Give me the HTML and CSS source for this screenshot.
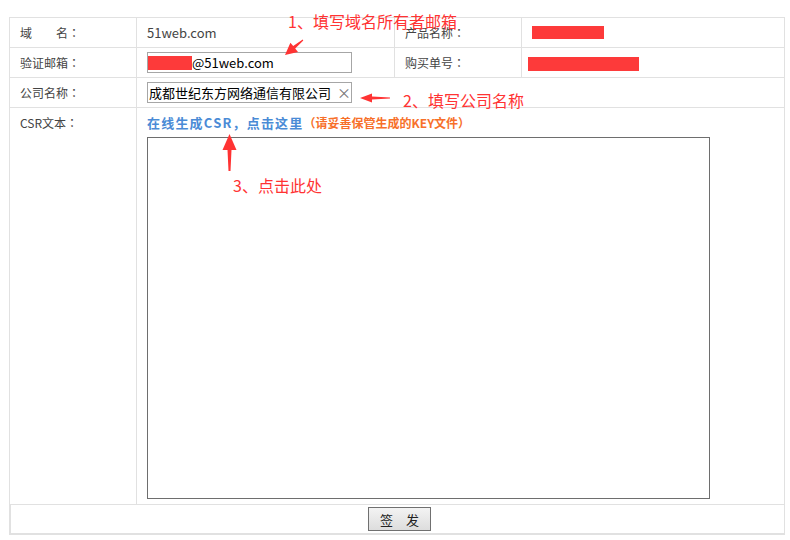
FILE: index.html
```html
<!DOCTYPE html>
<html lang="zh-CN">
<head>
<meta charset="utf-8">
<title>CSR 签发</title>
<link rel="stylesheet" href="styles.css">
</head>
<body>
<div class="page">
  <div class="form">
    <div class="cell label">域　　名<span class="colon">：</span></div>
    <div class="cell value">51web.com</div>
    <div class="cell label">产品名称<span class="colon">：</span></div>
    <div class="cell value"><span class="redact r1"></span></div>

    <div class="cell label">验证邮箱<span class="colon">：</span></div>
    <div class="cell value"><div class="input"><span class="redact r3"></span>@51web.com</div></div>
    <div class="cell label">购买单号<span class="colon">：</span></div>
    <div class="cell value"><span class="redact r2"></span></div>

    <div class="cell label">公司名称<span class="colon">：</span></div>
    <div class="cell value wide"><div class="input company">成都世纪东方网络通信有限公司<span class="clear">×</span></div></div>

    <div class="cell label top">CSR文本<span class="colon">：</span></div>
    <div class="cell wide csr">
      <div class="gen"><a class="genlink">在线生成CSR，点击这里</a><span class="warn">（请妥善保管生成的KEY文件）</span></div>
      <textarea class="csrbox"></textarea>
    </div>

    <div class="cell foot"><button class="submit">签　发</button></div>
  </div>

  <div class="note n1">1、填写域名所有者邮箱</div>
  <div class="note n2">2、填写公司名称</div>
  <div class="note n3">3、点击此处</div>
  <svg class="arrows" width="790" height="540" viewBox="0 0 790 540">
    <polygon points="285,55 298,51.9 295.2,48.5 303.3,40.4 302.7,39.6 293.2,46.1 290.4,42.7" />
    <polygon points="360,98 372,93.5 372,96.5 390,97.5 390,98.5 372,99.5 372,102.5" />
    <polygon points="229.5,134 222.5,150 227.5,150 228.5,171 230.5,171 231.5,150 236.5,150" />
  </svg>
</div>
</body>
</html>
```

FILE: styles.css
```css
body {
  margin: 0;
  background: #fff;
  font-family: "Noto Sans CJK SC", "Noto Sans", sans-serif;
  color: #333;
}

.page {
  position: relative;
  width: 790px;
  height: 540px;
  box-sizing: border-box;
  padding: 17px 0 0 9px;
}

.form {
  display: grid;
  grid-template-columns: 127px 258px 127px 263px;
  grid-template-rows: 30px 30px 30px 397px 30px;
  width: 776px;
  box-sizing: border-box;
  border-top: 1px solid #e1e1e1;
  border-left: 1px solid #e1e1e1;
}

.cell {
  box-sizing: border-box;
  border-right: 1px solid #e1e1e1;
  border-bottom: 1px solid #e1e1e1;
  padding-left: 10px;
  display: flex;
  align-items: center;
  font-size: 12px;
  line-height: 16px;
}

.label {
  color: #444;
}

.colon {
  font-family: "Noto Sans CJK TC", "Noto Sans CJK SC", sans-serif;
}

.label.top {
  align-items: flex-start;
  padding-top: 7px;
}

.value {
  font-size: 13px;
  color: #444;
}

.wide {
  grid-column: span 3;
}

.redact {
  display: inline-block;
  background: #fd3a3a;
}

.r1 {
  width: 72px;
  height: 13px;
}

.r2 {
  width: 111px;
  height: 14px;
  margin-left: -4px;
  margin-top: 3px;
}

.r3 {
  width: 44px;
  height: 14px;
}

.input {
  box-sizing: border-box;
  width: 205px;
  height: 21px;
  border: 1px solid #a6a6a6;
  display: flex;
  align-items: center;
  font-size: 13px;
  line-height: 19px;
  color: #000;
  white-space: nowrap;
  overflow: hidden;
}

.input .r3 {
  margin-top: 1px;
}

.company {
  padding-left: 1px;
}

.clear {
  color: #777;
  font-size: 14px;
  margin-left: 6px;
}

.csr {
  flex-direction: column;
  align-items: flex-start;
  padding-top: 7px;
}

.gen {
  white-space: nowrap;
  line-height: 16px;
}

.genlink {
  color: #4a8bd6;
  font-weight: bold;
  font-size: 13px;
  letter-spacing: 1.2px;
  cursor: pointer;
}

.warn {
  color: #f7702a;
  font-weight: bold;
  font-size: 12px;
}

.csrbox {
  display: block;
  box-sizing: border-box;
  width: 563px;
  height: 362px;
  margin: 6px 0 0 0;
  border: 1px solid #6e6e6e;
  resize: none;
  padding: 2px;
}

.foot {
  grid-column: span 4;
  border-left: 1px solid #e1e1e1;
  border-bottom-width: 2px;
  justify-content: center;
  padding-left: 4px;
}

.submit {
  box-sizing: border-box;
  width: 63px;
  height: 24px;
  border: 1px solid #707070;
  background: linear-gradient(#f3f3f3, #dddddd);
  font-family: "Noto Sans CJK SC", sans-serif;
  font-size: 13px;
  color: #222;
  padding: 0;
  border-radius: 0;
}

.note {
  position: absolute;
  color: #ff3333;
  font-size: 16px;
  line-height: 20px;
  white-space: nowrap;
}

.n1 {
  left: 288px;
  top: 11px;
}

.n2 {
  left: 403px;
  top: 90px;
}

.n3 {
  left: 233px;
  top: 175px;
}

.arrows {
  position: absolute;
  left: 0;
  top: 0;
  pointer-events: none;
  fill: #ff3333;
}
```
